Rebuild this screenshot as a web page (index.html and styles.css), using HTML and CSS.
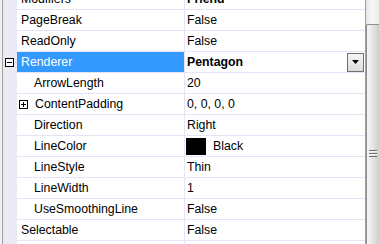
FILE: index.html
```html
<!DOCTYPE html>
<html lang="en">
<head>
    <meta charset="UTF-8">
    <meta name="viewport" content="width=device-width, initial-scale=1.0">
    <title>Properties</title>
    <link rel="stylesheet" href="styles.css">
</head>
<body>

    <div class="frame">
        <div class="grid">
            <div class="row">
                <div class="gut"></div>
                <div class="name">Modifiers</div>
                <div class="val bold">Friend</div>
            </div>
            <div class="row">
                <div class="gut"></div>
                <div class="name">PageBreak</div>
                <div class="val">False</div>
            </div>
            <div class="row">
                <div class="gut"></div>
                <div class="name">ReadOnly</div>
                <div class="val">False</div>
            </div>
            <div class="row sel">
                <div class="gut">
                    <svg class="tog" width="9" height="9" viewBox="0 0 9 9">
                        <rect x="0.5" y="0.5" width="8" height="8" fill="#fff" stroke="#000"/>
                        <line x1="2" y1="4.5" x2="7" y2="4.5" stroke="#000"/>
                    </svg>
                </div>
                <div class="name">Renderer</div>
                <div class="val bold">
                    Pentagon
                    <span class="drop">
                        <svg width="7" height="4" viewBox="0 0 7 4"><polygon points="0,0 7,0 3.5,4" fill="#000"/></svg>
                    </span>
                </div>
            </div>
            <div class="row">
                <div class="gut"></div>
                <div class="name sub">ArrowLength</div>
                <div class="val">20</div>
            </div>
            <div class="row">
                <div class="gut"></div>
                <div class="name sub exp">
                    <svg class="tog" width="9" height="9" viewBox="0 0 9 9">
                        <rect x="0.5" y="0.5" width="8" height="8" fill="#fff" stroke="#000"/>
                        <line x1="2" y1="4.5" x2="7" y2="4.5" stroke="#000"/>
                        <line x1="4.5" y1="2" x2="4.5" y2="7" stroke="#000"/>
                    </svg>
                    ContentPadding
                </div>
                <div class="val">0, 0, 0, 0</div>
            </div>
            <div class="row">
                <div class="gut"></div>
                <div class="name sub">Direction</div>
                <div class="val">Right</div>
            </div>
            <div class="row">
                <div class="gut"></div>
                <div class="name sub">LineColor</div>
                <div class="val"><span class="swatch"></span>Black</div>
            </div>
            <div class="row">
                <div class="gut"></div>
                <div class="name sub">LineStyle</div>
                <div class="val">Thin</div>
            </div>
            <div class="row">
                <div class="gut"></div>
                <div class="name sub">LineWidth</div>
                <div class="val">1</div>
            </div>
            <div class="row">
                <div class="gut"></div>
                <div class="name sub">UseSmoothingLine</div>
                <div class="val">False</div>
            </div>
            <div class="row">
                <div class="gut"></div>
                <div class="name">Selectable</div>
                <div class="val">False</div>
            </div>
            <div class="row">
                <div class="gut"></div>
                <div class="name"></div>
                <div class="val"></div>
            </div>
        </div>

        <div class="scroll">
            <div class="thumb">
                <div class="grip"></div>
            </div>
        </div>
    </div>

</body>
</html>
```

FILE: styles.css
```css
* {
    box-sizing: border-box;
}
body {
    margin: 0;
    background: #f0f0f0;
    font-family: "Liberation Sans", Arial, sans-serif;
    font-size: 12.3px;
    color: #000;
    overflow: hidden;
}
.frame {
    display: flex;
    height: 244px;
    padding-left: 2px;
    overflow: hidden;
}
.grid {
    flex: none;
    width: 364px;
    margin-top: -11px;
    border-left: 1px solid #a0a0a0;
    border-right: 1px solid #a0a0a0;
    background: #fff;
}
.row {
    display: grid;
    grid-template-columns: 14px 167px 181px;
    height: 21px;
}
.gut {
    background: #eaeaf4;
    display: flex;
    align-items: center;
    padding-left: 2px;
}
.name, .val {
    display: flex;
    align-items: center;
    border-bottom: 1px solid #e4e4f6;
    white-space: nowrap;
}
.name {
    padding-left: 4px;
}
.name.sub {
    padding-left: 17px;
}
.name.sub.exp {
    padding-left: 2px;
}
.name .tog {
    margin-right: 7px;
}
.val {
    border-left: 1px solid #e4e4f6;
    padding-left: 2px;
}
.bold {
    font-weight: bold;
}
.sel .name {
    background: #3399ff;
    color: #fff;
}
.drop {
    margin-left: auto;
    margin-right: 1px;
    width: 17px;
    height: 19px;
    border: 1px solid #707070;
    background: linear-gradient(#f6f6f6, #dcdcdc);
    display: flex;
    align-items: center;
    justify-content: center;
}
.swatch {
    width: 20px;
    height: 17px;
    margin-left: -1px;
    margin-right: 7px;
    background: #000;
}
.scroll {
    flex: none;
    width: 13px;
    background: linear-gradient(to right, #e6e6e6, #f5f5f5 40%, #eeeeee);
    padding-top: 24px;
}
.thumb {
    height: 260px;
    border: 1px solid #8c8c8c;
    border-right: none;
    border-radius: 2px 0 0 0;
    background: linear-gradient(to right, #f6f6f6, #e4e4e4 50%, #cdcdcd);
    padding-top: 125px;
    padding-left: 2px;
}
.grip {
    width: 8px;
    height: 7px;
    background: repeating-linear-gradient(#6e6e6e 0 1px, #f8f8f8 1px 2px, transparent 2px 3px);
}
```
